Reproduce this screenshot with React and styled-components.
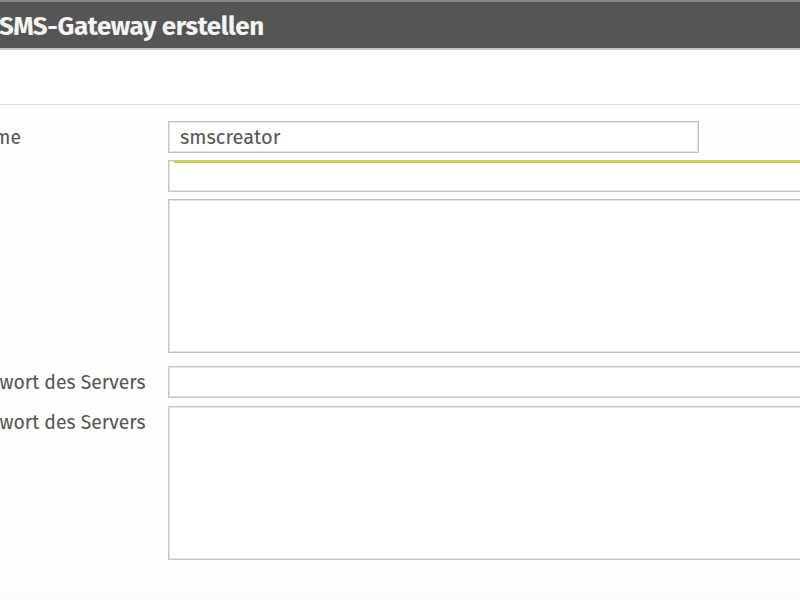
import styled, { createGlobalStyle } from "styled-components";

const Global = createGlobalStyle`
  html, body {
    margin: 0;
    padding: 0;
    background: #fcfcfc;
    overflow: hidden;
  }
  * { box-sizing: border-box; }
`;

const Page = styled.div`
  width: 800px;
  height: 600px;
  overflow: hidden;
  background: #fcfcfc;
  font-family: "Fira Sans", "Open Sans", "Noto Sans", sans-serif;
`;

const TopStrip = styled.div`
  height: 2px;
  background: #858585;
`;

const Header = styled.header`
  height: 48px;
  background: #555555;
  border-bottom: 2px solid #c4c4c4;
  display: flex;
  align-items: center;
  padding-top: 3px;
`;

const Title = styled.h1`
  margin: 0 0 0 -1px;
  color: #f4f4f4;
  font-size: 26px;
  font-weight: 700;
  letter-spacing: -0.4px;
`;

const Toolbar = styled.div`
  height: 55px;
  background: #ffffff;
  border-bottom: 1px solid #dcdcdc;
`;

const Form = styled.div`
  padding-top: 16px;
  margin-left: -30px;
  background: #fefefe;
  height: 482px;
`;

const Row = styled.div`
  display: grid;
  grid-template-columns: 198px 1fr;
  align-items: start;
  margin-bottom: ${p => p.$gap || 7}px;
`;

const Label = styled.label`
  color: #555;
  font-size: 19.4px;
  line-height: 33px;
  white-space: nowrap;
`;

const Field = styled.div`
  height: ${p => p.$h || 32}px;
  width: ${p => (p.$w ? `${p.$w}px` : "700px")};
  background: #fff;
  border: 1px solid #c4c4c4;
  box-shadow: inset 0 0 0 1px #e4e4e4;
  color: #555;
  font-size: 20px;
  line-height: 30px;
  padding: 0 11px;
  position: relative;
`;

const FocusLine = styled.span`
  position: absolute;
  top: 0;
  left: 5px;
  right: -300px;
  height: 2px;
  background: #d2d41c;
`;

export default function App() {
  return (
    <Page>
      <Global />
      <TopStrip />
      <Header>
        <Title>SMS-Gateway erstellen</Title>
      </Header>
      <Toolbar />
      <Form>
        <Row $gap={6}>
          <Label>Name</Label>
          <Field $w={531}>smscreator</Field>
        </Row>
        <Row $gap={7}>
          <Label />
          <Field>
            <FocusLine />
          </Field>
        </Row>
        <Row $gap={13}>
          <Label />
          <Field $h={154} />
        </Row>
        <Row $gap={7}>
          <Label>Antwort des Servers</Label>
          <Field />
        </Row>
        <Row>
          <Label>Antwort des Servers</Label>
          <Field $h={154} />
        </Row>
      </Form>
    </Page>
  );
}
